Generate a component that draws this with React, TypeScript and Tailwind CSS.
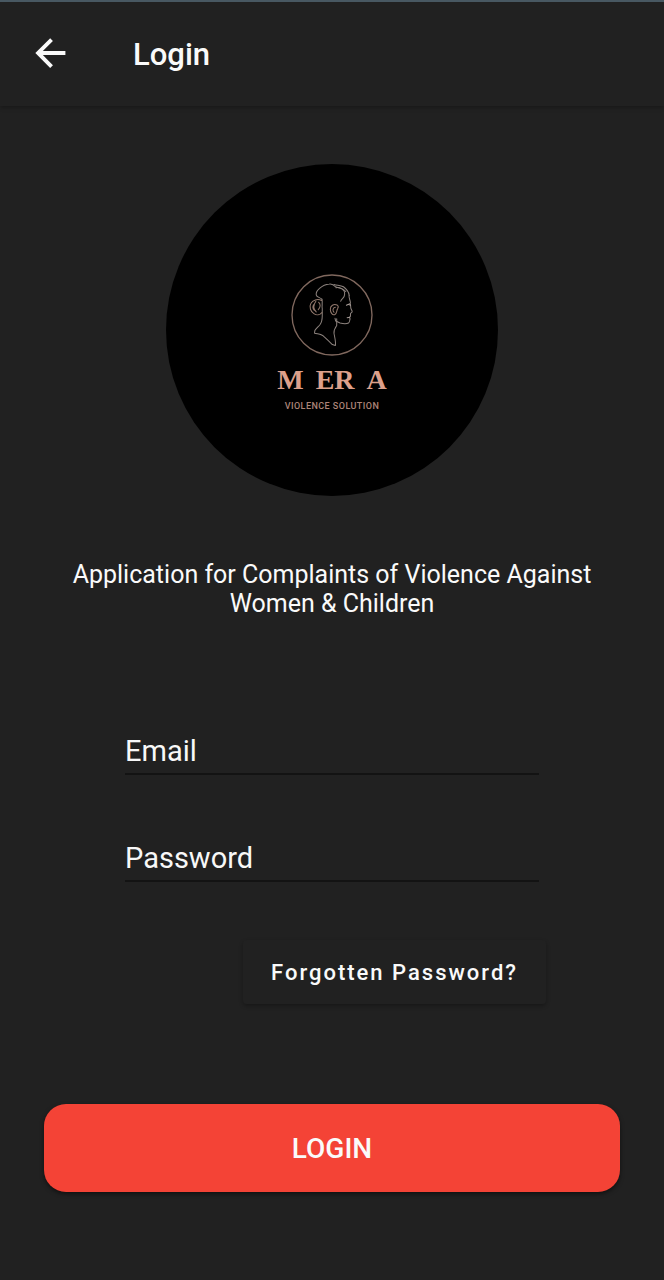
import React from "react";

function Portrait() {
  return (
    <svg viewBox="36 28 244 244" className="h-[82px] w-[82px]" fill="none" strokeLinecap="round" strokeLinejoin="round" aria-hidden="true">
      <circle cx="158" cy="150" r="119" stroke="#80685e" strokeWidth="4" />
      <g stroke="#8d837e" strokeWidth="3">
        <path d="M128 103c-5-5-16-6-17-13-1-8 4-14 10-19 8-7 17-12 29-13 7-1 14 3 18 8 8 4 17 3 23 9 6 5 5 14 3 20-2 6-9 7-10 14" />
        <path d="M164 59c10 3 20 2 28 7 8 6 16 14 17 25M170 69c10-2 23 3 29 11" />
        <path d="M128 103c3 10-1 19 1 28v21c0 10-1 19-7 27-5 6-11 10-15 17l-1 8c11 3 22 2 29 11 9 8 17 16 24 23l9 3c2-12-2-24-4-36-1-10 3-17 8-24v-20" />
        <path d="M209 91c-2 8 4 15 4 24l-8 4M213 118l1 12 4 9c1 3-4 4-5 7v8l-4 3 3 4c-2 5-1 10-5 13-8 4-17 2-25 0l-13-6-2-8" />
      </g>
      <g stroke="#93796d" strokeWidth="3">
        <path d="M127 107c-12-7-27-1-32 9-6 11 0 24 9 30 8 6 18 4 24-3" />
        <path d="M110 109c-7 10-9 22 1 32M118 112c7 6 6 15-1 22M104 119c-4 5-3 12 1 17" />
        <path d="M173 120c-10-4-20 2-20 13 0 8 6 19 13 16 7-2 5-13 9-18 3-5 1-9-2-11zM168 127c-8 1-9 10-4 15" />
      </g>
      <path d="M201 121c4-3 8-3 12 0M203 158l8-1" stroke="#a69b96" strokeWidth="3" />
    </svg>
  );
}

function Logo() {
  return (
    <div className="flex h-[332px] w-[332px] flex-col items-center rounded-full bg-black pt-[110px]">
      <Portrait />
      <p className="mt-2 flex gap-3 font-['Liberation_Serif',serif] text-[28px] leading-8 font-bold whitespace-nowrap text-[#dda08b]">
        <span>M</span>
        <span>ER</span>
        <span>A</span>
      </p>
      <p className="mt-1 font-[Roboto,sans-serif] text-[9px] leading-3 font-medium tracking-wider whitespace-nowrap text-[#ad8578]">
        VIOLENCE SOLUTION
      </p>
    </div>
  );
}

function Field({ id, label, type }: { id: string; label: string; type: string }) {
  return (
    <input
      id={id}
      name={id}
      type={type}
      aria-label={label}
      placeholder={label}
      className="block h-[50px] w-full border-b-2 border-[#131313] bg-transparent pt-1 text-[29px] leading-10 text-[#f8f8f8] outline-none placeholder:text-[#f8f8f8] placeholder:opacity-100"
    />
  );
}

export default function App() {
  return (
    <div className="min-h-screen bg-[#212121] font-[Roboto,sans-serif] text-[#fafafa]">
      <header className="flex h-[106px] items-center border-t-2 border-[#485862] pl-7 shadow-[0_2px_4px_rgba(0,0,0,0.25)]">
        <button type="button" aria-label="Back" className="flex h-11 w-11 items-center justify-center">
          <svg viewBox="0 0 24 24" className="h-11 w-11" fill="currentColor" aria-hidden="true">
            <path d="M20.4 10.4H8.1l5.5-5.5-1.5-1.5L4 11.5l8.1 8.1 1.5-1.5-5.5-5.5h12.3z" />
          </svg>
        </button>
        <h1 className="ml-[61px] pt-0.5 text-[31px] leading-9 font-medium">Login</h1>
      </header>

      <main className="flex flex-col items-center px-11 pt-[58px] pb-20">
        <Logo />
        <p className="mt-16 text-center text-[25px] leading-[29px]">
          Application for Complaints of Violence Against Women &amp; Children
        </p>

        <form className="mt-[107px] flex w-full flex-col" onSubmit={(e) => e.preventDefault()}>
          <div className="flex flex-col gap-[57px] px-[81px]">
            <Field id="email" label="Email" type="email" />
            <Field id="password" label="Password" type="password" />
          </div>
          <button
            type="button"
            className="mt-[58px] mr-[74px] h-16 self-end rounded px-7 text-[22px] font-medium tracking-[2px] shadow-[0_2px_4px_rgba(0,0,0,0.3)]"
          >
            Forgotten Password?
          </button>
          <button
            type="submit"
            className="mt-[100px] h-22 w-full rounded-[22px] bg-[#f44336] pt-0.5 text-[28px] font-medium shadow-[0_2px_4px_rgba(0,0,0,0.5)]"
          >
            LOGIN
          </button>
        </form>
      </main>
    </div>
  );
}
